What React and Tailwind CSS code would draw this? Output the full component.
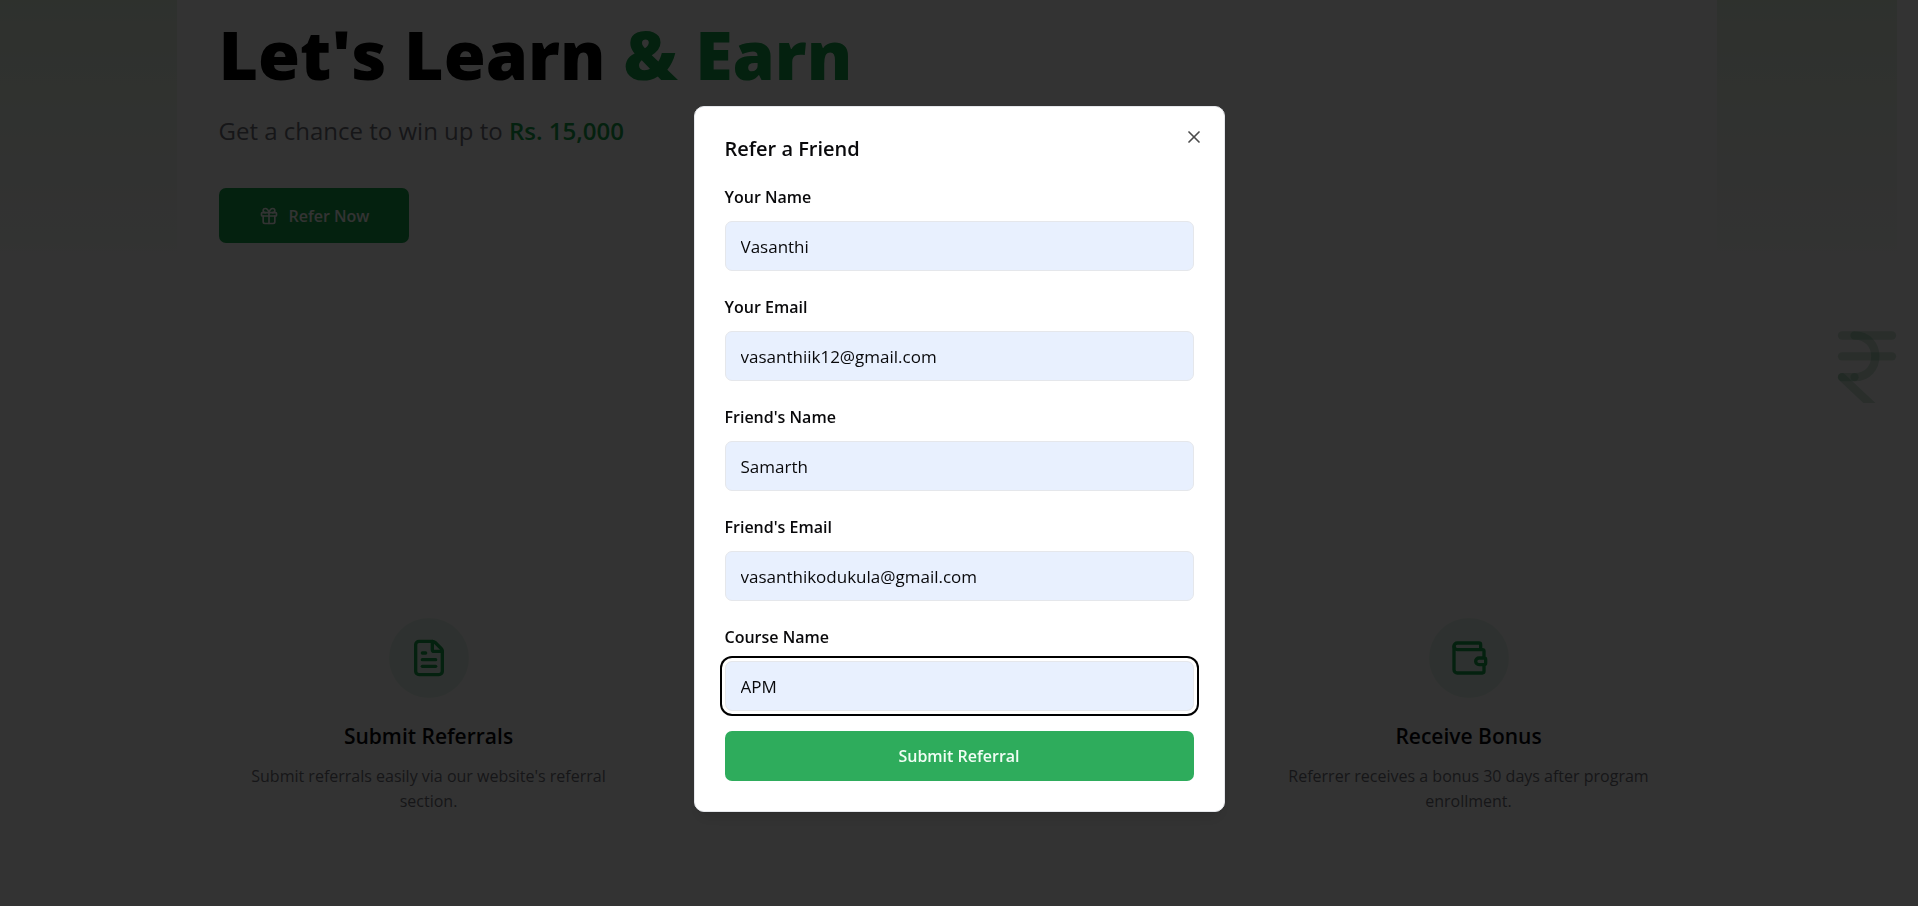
import { FileText, Gift, X } from "lucide-react";

const WalletIcon = () => (
  <svg viewBox="0 0 24 24" className="size-10" fill="none" stroke="currentColor" strokeWidth="2" strokeLinecap="round" strokeLinejoin="round" aria-hidden="true">
    <path d="M19 7V4a1 1 0 0 0-1-1H5a2 2 0 0 0 0 4h15a1 1 0 0 1 1 1v4h-3a2 2 0 0 0 0 4h3a1 1 0 0 0 1-1v-2a1 1 0 0 0-1-1" />
    <path d="M3 5v14a2 2 0 0 0 2 2h15a1 1 0 0 0 1-1v-4" />
  </svg>
);

const RupeeMark = () => (
  <svg viewBox="0 0 24 24" className="absolute -right-5 -bottom-5 size-[100px] stroke-[#15803d]/20" fill="none" strokeWidth="2" strokeLinecap="round" strokeLinejoin="round" aria-hidden="true">
    <path d="M6 3h12" />
    <path d="M6 8h12" />
    <path d="m6 13 8.5 8" />
    <path d="M6 13h3" />
    <path d="M9 13c6.667 0 6.667-10 0-10" />
  </svg>
);

function Step({ icon, title, children }) {
  return (
    <article className="flex w-[420px] flex-col items-center text-center">
      <div className="flex size-20 items-center justify-center rounded-full bg-[#16a34a]/10 text-[#16a34a]">{icon}</div>
      <h3 className="mt-5 text-[21px] leading-9 font-semibold">{title}</h3>
      <p className="mt-[10px] px-5 text-[16px] leading-[25px] text-[#71717a]">{children}</p>
    </article>
  );
}

const fields = [
  { id: "your-name", label: "Your Name", type: "text", value: "Vasanthi" },
  { id: "your-email", label: "Your Email", type: "email", value: "vasanthiik12@gmail.com" },
  { id: "friend-name", label: "Friend's Name", type: "text", value: "Samarth" },
  { id: "friend-email", label: "Friend's Email", type: "email", value: "vasanthikodukula@gmail.com" },
  { id: "course", label: "Course Name", type: "text", value: "APM", active: true },
];

export default function App() {
  return (
    <div className="relative min-h-screen overflow-hidden bg-white font-['Open_Sans',sans-serif] text-[#09090b]">
      <main className="mr-[21px]">
        <section className="relative overflow-hidden pt-4 pb-40">
          <div className="absolute top-0 left-0 h-[264px] w-[177px] bg-linear-to-b from-[#e6f4e2] to-[#fdfdfd]" />
          <div className="absolute top-0 right-0 h-[264px] w-[180px] bg-linear-to-b from-[#e6f4e2] to-[#fdfdfd]" />
          <RupeeMark />
          <div className="relative mx-auto max-w-[1460px]">
            <h1 className="text-[68px] leading-[75px] font-extrabold text-black">
              Let's Learn <span className="text-[#16a34a]">&amp; Earn</span>
            </h1>
            <p className="mt-5 text-[24px] leading-10 text-[#71717a]">
              Get a chance to win up to <strong className="font-semibold text-[#16a34a]">Rs. 15,000</strong>
            </p>
            <button type="button" className="mt-[37px] flex h-[55px] items-center gap-[10px] rounded-[7px] bg-[#16a34a] px-10 text-[16px] font-semibold text-white">
              <Gift className="size-5" strokeWidth={2} />
              Refer Now
            </button>
          </div>
        </section>
        <section className="mx-auto mt-[215px] flex max-w-[1460px] justify-between">
          <Step icon={<FileText className="size-10" />} title="Submit Referrals">Submit referrals easily via our website's referral section.</Step>
          <Step icon={<WalletIcon />} title="Receive Bonus">Referrer receives a bonus 30 days after program enrollment.</Step>
        </section>
      </main>
      <div className="fixed inset-0 flex items-center justify-center bg-black/80 pt-3">
        <div role="dialog" aria-labelledby="dialog-title" className="relative w-full max-w-[531px] rounded-[10px] border border-gray-200 bg-white p-[30px] shadow-lg">
          <button type="button" aria-label="Close" className="absolute top-5 right-5 text-black opacity-70">
            <X className="size-5" strokeWidth={2} />
          </button>
          <h2 id="dialog-title" className="text-[20px] leading-6 font-semibold">Refer a Friend</h2>
          <form className="mt-5">
            {fields.map((f) => (
              <div key={f.id} className="mb-5">
                <label htmlFor={f.id} className="block text-[16px] leading-8 font-semibold">{f.label}</label>
                <input
                  id={f.id}
                  type={f.type}
                  defaultValue={f.value}
                  className={
                    "mt-2 block h-[50px] w-full rounded-[7px] border border-gray-200 bg-[#e8f0fe] px-[15px] text-[17px]" +
                    (f.active ? " ring-2 ring-black ring-offset-3 ring-offset-white" : "")
                  }
                />
              </div>
            ))}
            <button type="submit" className="block h-[50px] w-full rounded-[7px] bg-[#2eac5c] text-[16px] font-semibold text-green-50">Submit Referral</button>
          </form>
        </div>
      </div>
    </div>
  );
}
